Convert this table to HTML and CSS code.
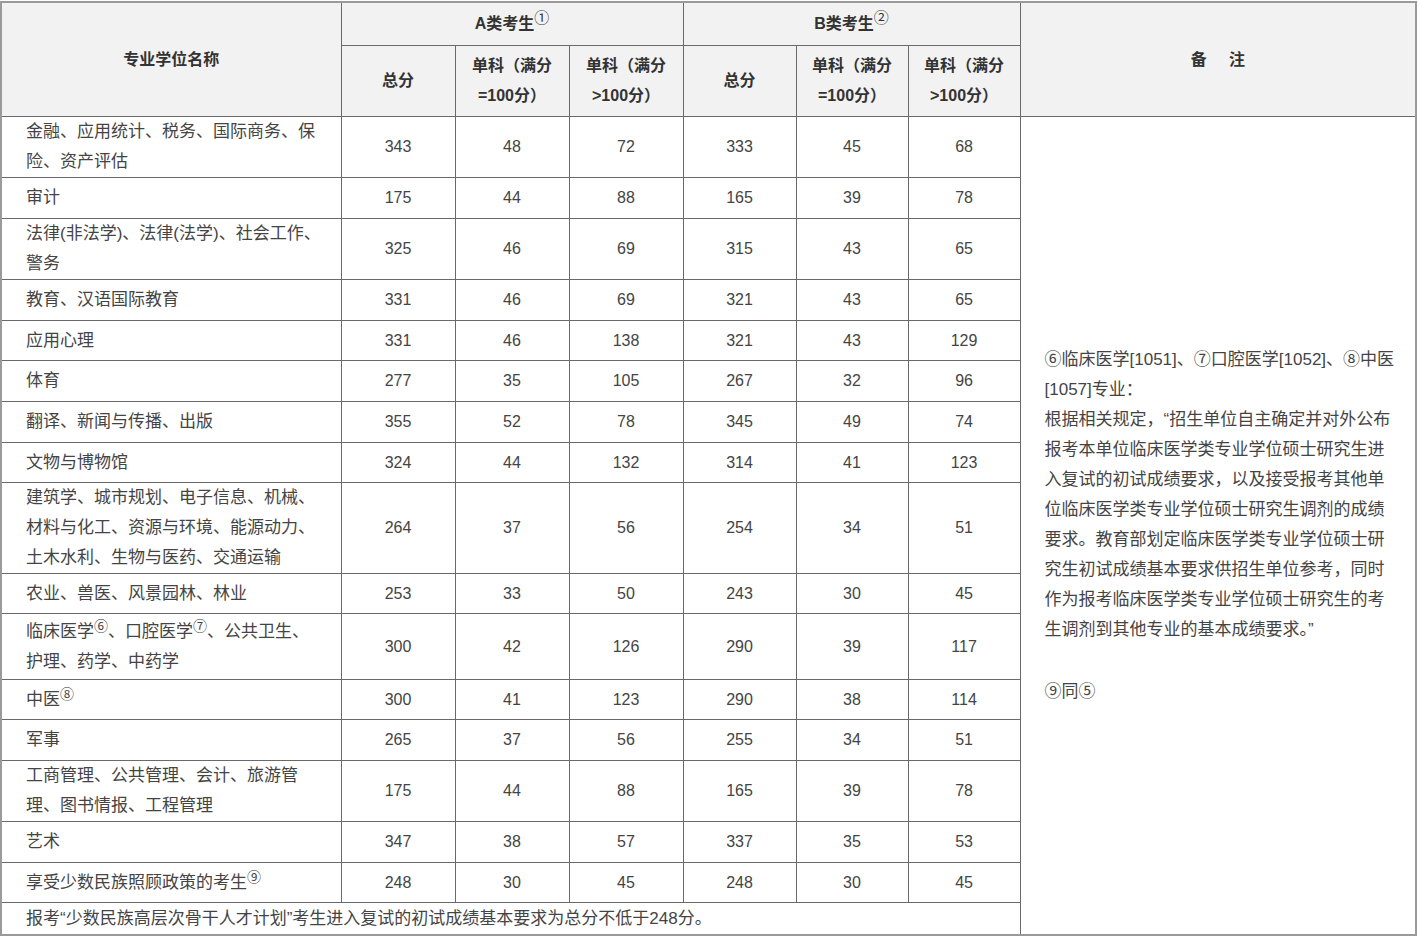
FILE: index.html
```html
<!DOCTYPE html>
<html lang="zh-CN">
<head>
<meta charset="utf-8">
<title>专业学位复试基本分数线</title>
<link rel="stylesheet" href="styles.css">
</head>
<body>
<table class="score-table">
  <colgroup>
    <col class="c-name">
    <col class="c-num"><col class="c-num"><col class="c-num">
    <col class="c-numb"><col class="c-numc"><col class="c-numc">
    <col class="c-note">
  </colgroup>
  <thead>
    <tr class="h1">
      <th rowspan="2">专业学位名称</th>
      <th colspan="3">A类考生<sup>①</sup></th>
      <th colspan="3">B类考生<sup>②</sup></th>
      <th rowspan="2" class="note-head">备&nbsp;&nbsp;&nbsp;&nbsp;&nbsp;注</th>
    </tr>
    <tr class="h2">
      <th>总分</th>
      <th>单科（满分<br>=100分）</th>
      <th>单科（满分<br>&gt;100分）</th>
      <th>总分</th>
      <th>单科（满分<br>=100分）</th>
      <th>单科（满分<br>&gt;100分）</th>
    </tr>
  </thead>
  <tbody>
    <tr>
      <td class="name">金融、应用统计、税务、国际商务、保<br>险、资产评估</td>
      <td>343</td><td>48</td><td>72</td><td>333</td><td>45</td><td>68</td>
      <td rowspan="17" class="note">⑥临床医学[1051]、⑦口腔医学[1052]、⑧中医<br>[1057]专业：<br>根据相关规定，“招生单位自主确定并对外公布<br>报考本单位临床医学类专业学位硕士研究生进<br>入复试的初试成绩要求，以及接受报考其他单<br>位临床医学类专业学位硕士研究生调剂的成绩<br>要求。教育部划定临床医学类专业学位硕士研<br>究生初试成绩基本要求供招生单位参考，同时<br>作为报考临床医学类专业学位硕士研究生的考<br>生调剂到其他专业的基本成绩要求。”<br><br><span class="gap">⑨同⑤</span></td>
    </tr>
    <tr><td class="name">审计</td><td>175</td><td>44</td><td>88</td><td>165</td><td>39</td><td>78</td></tr>
    <tr><td class="name">法律(非法学)、法律(法学)、社会工作、<br>警务</td><td>325</td><td>46</td><td>69</td><td>315</td><td>43</td><td>65</td></tr>
    <tr><td class="name">教育、汉语国际教育</td><td>331</td><td>46</td><td>69</td><td>321</td><td>43</td><td>65</td></tr>
    <tr class="short"><td class="name">应用心理</td><td>331</td><td>46</td><td>138</td><td>321</td><td>43</td><td>129</td></tr>
    <tr><td class="name">体育</td><td>277</td><td>35</td><td>105</td><td>267</td><td>32</td><td>96</td></tr>
    <tr><td class="name">翻译、新闻与传播、出版</td><td>355</td><td>52</td><td>78</td><td>345</td><td>49</td><td>74</td></tr>
    <tr class="short"><td class="name">文物与博物馆</td><td>324</td><td>44</td><td>132</td><td>314</td><td>41</td><td>123</td></tr>
    <tr><td class="name">建筑学、城市规划、电子信息、机械、<br>材料与化工、资源与环境、能源动力、<br>土木水利、生物与医药、交通运输</td><td>264</td><td>37</td><td>56</td><td>254</td><td>34</td><td>51</td></tr>
    <tr class="short"><td class="name">农业、兽医、风景园林、林业</td><td>253</td><td>33</td><td>50</td><td>243</td><td>30</td><td>45</td></tr>
    <tr class="tall"><td class="name">临床医学<sup>⑥</sup>、口腔医学<sup>⑦</sup>、公共卫生、<br>护理、药学、中药学</td><td>300</td><td>42</td><td>126</td><td>290</td><td>39</td><td>117</td></tr>
    <tr class="short"><td class="name">中医<sup>⑧</sup></td><td>300</td><td>41</td><td>123</td><td>290</td><td>38</td><td>114</td></tr>
    <tr><td class="name">军事</td><td>265</td><td>37</td><td>56</td><td>255</td><td>34</td><td>51</td></tr>
    <tr><td class="name">工商管理、公共管理、会计、旅游管<br>理、图书情报、工程管理</td><td>175</td><td>44</td><td>88</td><td>165</td><td>39</td><td>78</td></tr>
    <tr><td class="name">艺术</td><td>347</td><td>38</td><td>57</td><td>337</td><td>35</td><td>53</td></tr>
    <tr class="short"><td class="name">享受少数民族照顾政策的考生<sup>⑨</sup></td><td>248</td><td>30</td><td>45</td><td>248</td><td>30</td><td>45</td></tr>
    <tr class="foot"><td colspan="7" class="name">报考“少数民族高层次骨干人才计划”考生进入复试的初试成绩基本要求为总分不低于248分。</td></tr>
  </tbody>
</table>
</body>
</html>
```
FILE: styles.css
```css
html, body {
  margin: 0;
  padding: 0;
  background: #ffffff;
}

body {
  padding-top: 1px;
}

.score-table {
  border-collapse: collapse;
  table-layout: fixed;
  width: 1415px;
  border: 2px solid #9a9a9a;
  font-family: "Liberation Sans", "Noto Sans CJK SC", sans-serif;
  color: #444;
}

.c-name { width: 340px; }
.c-num { width: 114px; }
.c-numb { width: 113px; }
.c-numc { width: 112px; }
.c-note { width: 396px; }

.score-table th,
.score-table td {
  border: 1px solid #6a6a6a;
  padding: 0;
  text-align: center;
  vertical-align: middle;
}

.score-table th {
  background: #f2f2f2;
  color: #333;
  font-weight: bold;
  font-size: 16px;
  line-height: 30px;
}

.h1 th {
  height: 42px;
}

.h2 th {
  height: 70px;
}

.score-table td {
  font-size: 16px;
  line-height: 30px;
  height: 40px;
}

.score-table td.name {
  text-align: left;
  padding: 0 24px;
  font-size: 17px;
  white-space: nowrap;
}

.score-table tr.short td {
  height: 39px;
}

.score-table tr.tall td {
  height: 65px;
}

.score-table tr.foot td {
  height: 31px;
}

.score-table td.note {
  text-align: left;
  padding: 0 24px;
  font-size: 17px;
  white-space: nowrap;
  border-bottom: none;
}

.note .gap {
  display: inline-block;
  margin-top: 2px;
}

sup {
  font-size: 14px;
  line-height: 0;
  vertical-align: 6px;
}

th sup {
  font-weight: normal;
  font-size: 15px;
  vertical-align: 6px;
}
```
